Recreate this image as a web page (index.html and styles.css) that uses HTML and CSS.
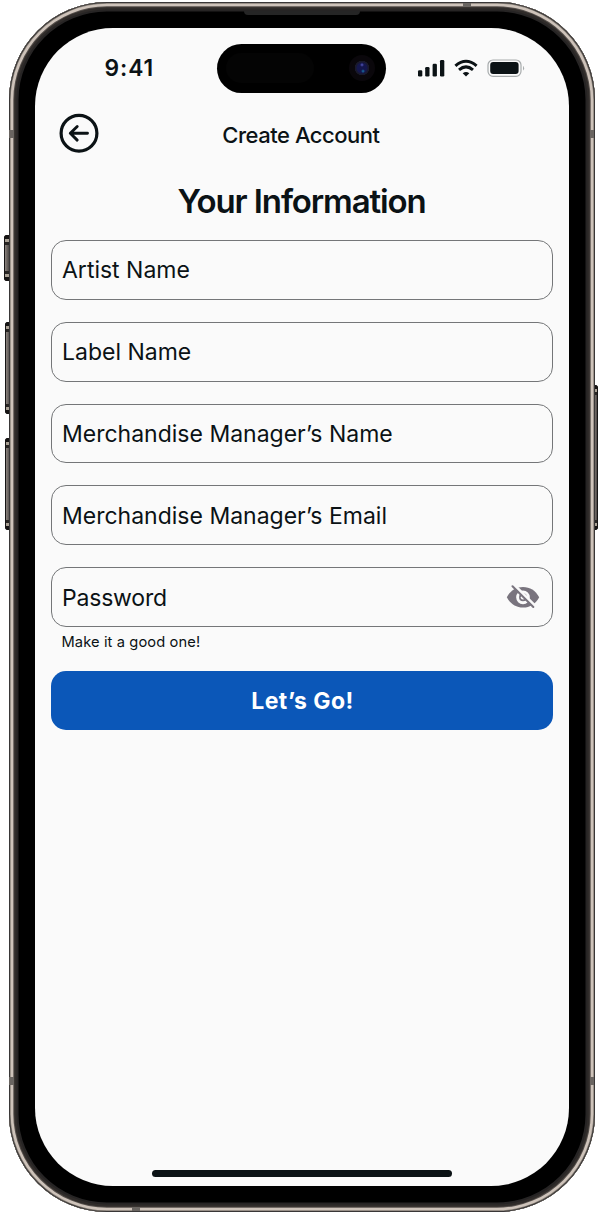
FILE: index.html
```html
<!DOCTYPE html>
<html lang="en">
<head>
<meta charset="utf-8">
<title>Create Account</title>
<link rel="stylesheet" href="styles.css">
</head>
<body>
<div class="phone">
  <i class="key action"></i><i class="key vol-up"></i><i class="key vol-down"></i><i class="key power"></i>
  <div class="shell">
    <i class="band left upper"></i><i class="band left lower"></i><i class="band right upper"></i><i class="band right lower"></i><i class="band top"></i><i class="band bottom"></i>
    <i class="speaker"></i>
    <main class="screen">
      <div class="status">
        <span class="time">9:41</span>
        <div class="island"><i class="sensor"></i><i class="lens"></i></div>
        <svg class="signals" width="108" height="20" viewBox="0 0 108 20">
          <g fill="#0b1215">
            <rect x="1" y="11.3" width="4.3" height="6.2" rx="1.3"/><rect x="8.2" y="8" width="4.3" height="9.5" rx="1.3"/><rect x="15.6" y="4.7" width="4.3" height="12.8" rx="1.3"/><rect x="23" y="1" width="4.3" height="16.5" rx="1.3"/>
            <path d="M45.700 14.300Q49 11.800 52.300 14.300L49 17.600Z"/>
          </g>
          <g fill="none" stroke="#0b1215" stroke-width="3"><path d="M38.400 6.800Q49-2.300 59.600 6.800"/><path d="M42 10.800Q49 4.900 56 10.800"/></g>
          <rect x="71" y="1" width="33" height="16.300" rx="5" fill="#fafafa" stroke="#a7abac" stroke-width="1.200"/>
          <rect x="73.200" y="3.100" width="28.400" height="12" rx="3" fill="#0b1215"/>
          <path d="M106 6.800Q108.200 9.200 106 11.600Z" fill="#a7abac"/>
        </svg>
      </div>
      <header class="nav">
        <svg class="back" width="40" height="40" viewBox="0 0 40 40" fill="none" stroke="#0b1215" stroke-linecap="round" stroke-linejoin="round"><circle cx="20" cy="20.300" r="17.900" stroke-width="3.200"/><path d="M28.500 20.300H11.500M18.200 13.500L11.300 20.300L18.200 27.100" stroke-width="2.900"/></svg>
        <span class="nav-title">Create Account</span>
      </header>
      <h1 class="title">Your Information</h1>
      <form class="form">
        <div class="field"><span>Artist Name</span></div>
        <div class="field"><span>Label Name</span></div>
        <div class="field"><span>Merchandise Manager’s Name</span></div>
        <div class="field"><span>Merchandise Manager’s Email</span></div>
        <div class="field"><span class="tight">Password</span>
          <svg class="eye" width="34" height="26" viewBox="0 0 34 26"><path d="M.8 12.300C4.500 5.500 10 2 17 2S29.500 5.500 33.200 12.300C29.500 19.100 24 22.600 17 22.600S4.500 19.100 .8 12.300Z" fill="#79747e"/><circle cx="17" cy="12.300" r="5.400" fill="#79747e" stroke="#fafafa" stroke-width="2.900"/><circle cx="17" cy="12.300" r="2.200" fill="#fafafa"/><path d="M8.500 .2L29.500 21.200" stroke="#fafafa" stroke-width="2.800"/><path d="M6.500 1.200L27.300 22" stroke="#79747e" stroke-width="2" stroke-linecap="round"/></svg>
        </div>
        <p class="hint">Make it a good one!</p>
        <button class="submit" type="button">Let’s Go!</button>
      </form>
      <i class="home"></i>
    </main>
  </div>
</div>
</body>
</html>
```
FILE: styles.css
```css
* { box-sizing: border-box; }
body { margin: 0; background: #fff; color: #0b1215; font-family: Inter, "Liberation Sans", sans-serif; }
.phone { position: relative; width: 600px; height: 1214px; padding: 2px 5.5px 2.5px 8.5px; overflow: hidden; }
.shell { position: relative; height: 100%; padding: 26px; border-radius: 98px; background: #000;
  box-shadow: inset 0 0 0 1px #393737, inset 0 0 0 1.700px #888078, inset 0 0 0 4.300px #cec3ba, inset 0 0 0 5.300px #544e4a, inset 0 0 0 7.500px #302c2a, inset 0 0 0 9.500px #262424; }
.screen { display: flex; flex-direction: column; height: 100%; border-radius: 78px; background: #fafafa; overflow: hidden; }
.key { position: absolute; width: 6px; border: 1px solid #171515; border-radius: 2px 0 0 2px; background: linear-gradient(#171515 0 3px, #aaa195 3px 6px, #292624 6px 9px, transparent 9px calc(100% - 9px), #292624 calc(100% - 9px) calc(100% - 6px), #aaa195 calc(100% - 6px) calc(100% - 3px), #171515 0), linear-gradient(90deg, #8c847f, #4b4644); }
.action { left: 3.500px; top: 235px; height: 46px; }
.vol-up { left: 4.500px; top: 322px; height: 92px; }
.vol-down { left: 4.500px; top: 438px; height: 92px; }
.power { left: 593px; top: 385px; width: 5px; height: 145px; border-radius: 0 2px 2px 0; }
.band { position: absolute; background: #6a6561; }
.left, .right { width: 4.500px; height: 8px; }
.left { left: .5px; }
.right { right: .5px; }
.upper { top: 128px; }
.lower { bottom: 127px; }
.top, .bottom { width: 8px; height: 4px; }
.top { left: 454px; top: .5px; }
.bottom { left: 123px; bottom: .5px; }
.speaker { position: absolute; left: 235px; top: 9px; width: 116px; height: 4px; background: #252525; border-radius: 0 0 4px 4px; }
.status { display: grid; grid-template-columns: 182.500px 168.500px 1fr; height: 66px; padding-top: 15.500px; }
.time { padding: 9px 0 0 70px; font-size: 22.800px; line-height: 30px; font-weight: 560; letter-spacing: .9px; }
.island { display: flex; justify-content: space-between; align-items: center; height: 49.500px; padding: 0 11px 0 9px; border-radius: 25px; background: #000; }
.sensor { width: 88px; height: 30px; border-radius: 15px; background: #040404; }
.lens { width: 26px; height: 26px; border-radius: 50%; background: radial-gradient(circle at 50% 38%, #4547a0 0 .5px, transparent 2px), radial-gradient(circle at 54% 62%, #176091 0 .5px, transparent 2px), radial-gradient(circle, #14164c 0 5px, #19192b 6px 7px, #0a070b 7.500px); }
.signals { margin: 15.700px 0 0 31.500px; }
.nav { display: grid; grid-template-columns: 1fr auto 1fr; height: 87px; padding: 19px 24.500px 0; }
.nav-title { padding-top: 7px; margin-left: -1px; font-size: 22px; line-height: 30px; font-weight: 550; letter-spacing: -.48px; }
.title { margin: 0; height: 60px; font-size: 33px; line-height: 40px; font-weight: 560; letter-spacing: -1.120px; text-align: center; }
.form { display: flex; flex-direction: column; padding: 0 16px; gap: 22px; margin-top: -1px; }
.field { display: flex; align-items: center; justify-content: space-between; height: 59.800px; padding: 1px 12px 0 10.500px; border: 1px solid #747678; border-radius: 15px; font-size: 23px; font-weight: 380; white-space: nowrap; letter-spacing: 0; }
.tight { letter-spacing: -.2px; }
.hint { margin: -16px 0 0 11px; height: 16px; font-size: 14.700px; line-height: 18px; letter-spacing: .1px; }
.submit { height: 59.500px; padding-left: 8px; border: 0; border-radius: 15px; background: #0b57b8; color: #fff; font: 700 23px Inter, sans-serif; letter-spacing: .45px; }
.home { width: 300px; height: 7px; margin: auto auto 8.500px; border-radius: 4px; background: #0b1215; }
```
